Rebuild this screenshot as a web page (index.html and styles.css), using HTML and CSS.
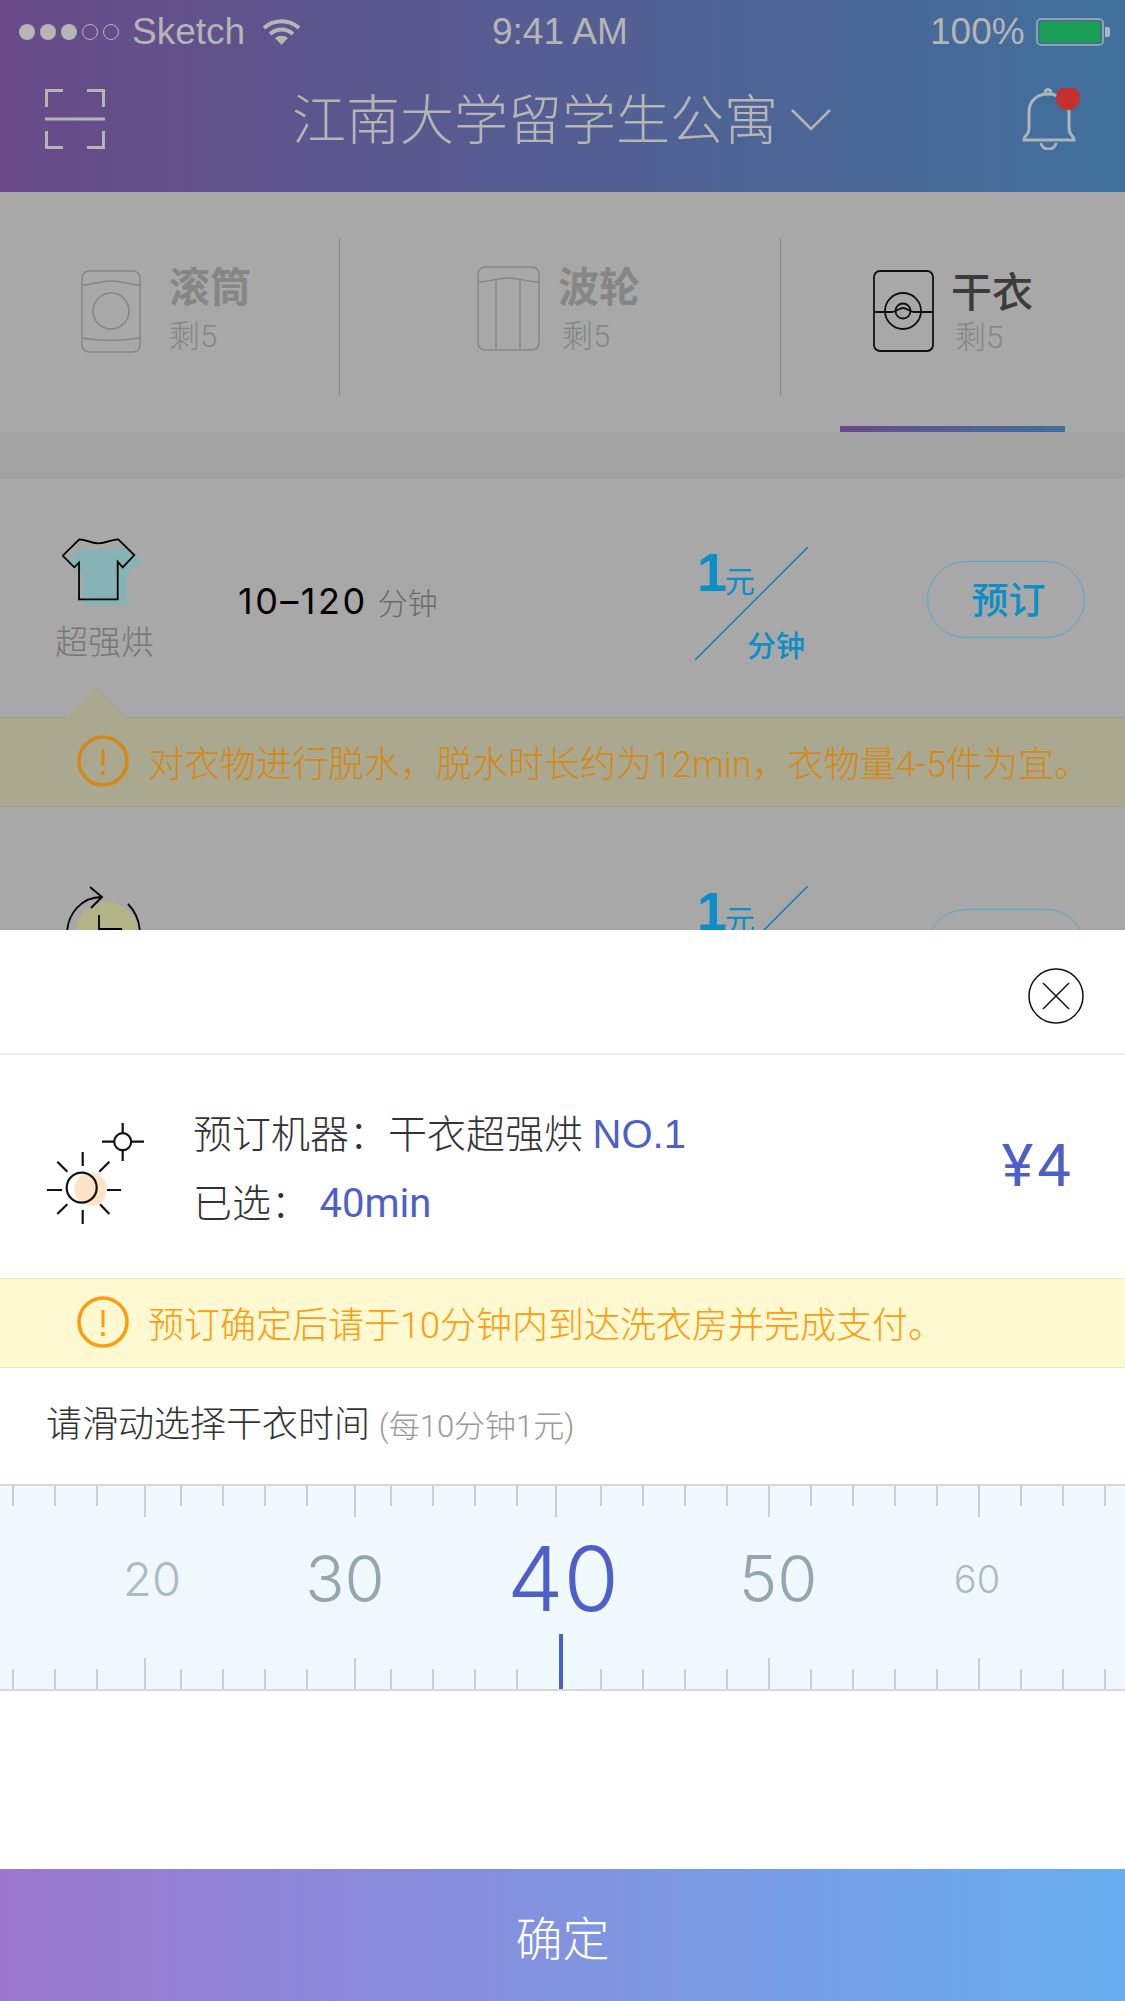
FILE: index.html
```html
<!DOCTYPE html>
<html>
<head>
<title>干衣预订</title>
<meta http-equiv="content-type" content="text/html; charset=utf-8" />
<link rel="stylesheet" href="styles.css">
</head>
<body>

<div class="behind">
	<div class="header">
		<div class="status">
			<span class="dot"></span><span class="dot"></span><span class="dot"></span><span class="dot dot-off"></span><span class="dot dot-off"></span>
			<span class="carrier">Sketch</span>
			<svg class="wifi" width="39" height="27" viewBox="0 0 39 27"><path d="M2 10 C12 1 27 1 37 10 M8 16 C15 10 24 10 31 16" fill="none" stroke="#b5b5b5" stroke-width="4"/><path d="M13 20 C17 17 22 17 26 20 L19.500 27 Z" fill="#b5b5b5"/></svg>
			<span class="clock">9:41 AM</span>
			<span class="percent">100%</span>
			<svg class="battery" width="74" height="28" viewBox="0 0 74 28"><rect x="1" y="1" width="66" height="26" rx="4" fill="none" stroke="#a9b4bd" stroke-width="1.500"/><rect x="3.500" y="3.500" width="61" height="21" rx="2" fill="#1b9f57"/><path d="M69 9 h3 a2 2 0 0 1 2 2 v6 a2 2 0 0 1 -2 2 h-3 Z" fill="#a9b4bd"/></svg>
		</div>
		<div class="nav">
			<svg class="scan" width="60" height="60" viewBox="0 0 60 60"><path d="M1.500 18 V1.500 H18 M42 1.500 H58.500 V18 M0 30 H60 M1.500 42 V58.500 H18 M42 58.500 H58.500 V42" fill="none" stroke="#b5b5b5" stroke-width="3"/></svg>
			<span class="title">江南大学留学生公寓</span>
			<svg class="chevron" width="40" height="22" viewBox="0 0 40 22"><path d="M1 1 L20 20 L39 1" fill="none" stroke="#b5b5b5" stroke-width="2.500"/></svg>
			<svg class="bell" width="60" height="62" viewBox="0 0 60 62"><path d="M2 52 C2 47 7 48 7 40 V24 C7 13 15 6 26 6 C37 6 47 13 47 24 V40 C47 48 52 47 52 52 Z M23 6 C23 0 29 0 29 6 M19 55 C20 63 33 63 34 55" fill="none" stroke="#a9b4bd" stroke-width="3"/><circle cx="46" cy="10" r="12" fill="#c5302e"/></svg>
		</div>
	</div>

	<div class="tabs">
		<div class="tab tab-a">
			<svg class="tab-icon" width="60" height="84" viewBox="-1 -1 60 84"><g fill="none" stroke="#858585" stroke-width="1.500"><rect x="0" y="0" width="58" height="81" rx="7"/><path d="M0 14 C12 14 16 10 29 10 C42 10 46 14 58 14 M0 67 C18 70 40 70 58 67"/><circle cx="29" cy="40" r="18"/></g></svg>
			<div class="tab-text"><b>滚筒</b><span>剩5</span></div>
		</div>
		<div class="tab tab-b">
			<svg class="tab-icon" width="63" height="86" viewBox="-1 -1 63 86"><g fill="none" stroke="#858585" stroke-width="1.500"><rect x="0" y="0" width="61" height="83" rx="7"/><path d="M0 15 C14 15 18 11 30 11 C42 11 47 15 61 15 M18 14 V84 M42 14 V84"/></g></svg>
			<div class="tab-text"><b>波轮</b><span>剩5</span></div>
		</div>
		<div class="tab tab-c">
			<svg class="tab-icon" width="61" height="82" viewBox="-1 -1 61 82"><g fill="none" stroke="#111" stroke-width="1.800"><rect x="0" y="0" width="59" height="80" rx="6"/><path d="M0 41 H18 C22 41 25 37 29 37 C33 37 36 41 40 41 H59"/><circle cx="29" cy="40" r="18"/><circle cx="29" cy="40" r="7.500"/></g></svg>
			<div class="tab-text tab-text-on"><b>干衣</b><span>剩5</span></div>
		</div>
		<div class="tab-line"></div>
	</div>
	<div class="strip"></div>

	<div class="row">
		<div class="mode">
			<svg width="82" height="68" viewBox="0 0 82 68"><path d="M6 20 L21 10 Q40 14 58 8 L81 23 L68 34 L65 32 V67 H21 V32 L16 34 Z" fill="#86b3b5"/><path d="M17.300 1.300 C24 1.300 28 5.300 36.300 5.300 C45 5.300 49 1.300 56.300 1.300 L72.300 17 L60.700 29.300 L55.700 23.700 V61.300 H17 V24.700 L12.300 29.300 L0.700 17.700 Z" fill="none" stroke="#000" stroke-width="1.800"/></svg>
			<span>超强烘</span>
		</div>
		<div class="duration"><b>10–120</b><span>分钟</span></div>
		<div class="price">
			<svg class="price-slash" width="113" height="113" viewBox="0 0 113 113"><path d="M0 113 L113 0" stroke="#117fae" stroke-width="1.500"/></svg>
			<div class="price-top"><b>1</b><span>元</span></div>
			<div class="price-unit">分钟</div>
		</div>
		<div class="book">预订</div>
	</div>

	<div class="notice notice-dim">
		<div class="notice-arrow"></div>
		<svg class="warn" width="52" height="52" viewBox="0 0 52 52"><g fill="none" stroke="#d68816"><circle cx="26" cy="26" r="24" stroke-width="3.500"/><path d="M26 14 V31" stroke-width="3"/><path d="M26 36 V40" stroke-width="3.500"/></g></svg>
		<span>对衣物进行脱水，脱水时长约为12min，衣物量4-5件为宜。</span>
	</div>

	<div class="row row-next">
		<div class="mode">
			<svg width="82" height="60" viewBox="0 0 82 60"><circle cx="45" cy="49" r="32" fill="#b3b488"/><path d="M5 50 C5 28 20 12 40 12 M28 2 L40 12 L29 23 M66 19 C74 27 78 38 78 50 M37 30 V44 H60" fill="none" stroke="#000" stroke-width="1.800"/></svg>
		</div>
		<div class="price">
			<svg class="price-slash" width="113" height="113" viewBox="0 0 113 113"><path d="M0 113 L113 0" stroke="#117fae" stroke-width="1.500"/></svg>
			<div class="price-top"><b>1</b><span>元</span></div>
		</div>
		<div class="book"></div>
	</div>
</div>

<div class="sheet">
	<div class="sheet-head">
		<svg width="56" height="56" viewBox="0 0 56 56"><circle cx="28" cy="28" r="27" fill="none" stroke="#111" stroke-width="1.500"/><path d="M15 15 L41 41 M41 15 L15 41" stroke="#111" stroke-width="1.500"/></svg>
	</div>

	<div class="info">
		<svg class="sun" width="98" height="103" viewBox="0 0 98 103"><circle cx="43.700" cy="67.300" r="16.500" fill="#fde4c8"/><g fill="none" stroke="#111" stroke-width="2.200"><circle cx="34.700" cy="65.700" r="15"/><path d="M35.700 30 V44 M35.700 88 V102 M0 68 H15 M60 68 H74 M10.300 39.700 L20.300 49.700 M62.300 39.700 L52.300 49.700 M10.300 92 L20.300 82.300 M62.300 92 L53 82.300"/><circle cx="75.700" cy="19.700" r="8.500"/><path d="M75.700 1 V11 M75.700 29 V39 M55 19.700 H67 M85 19.700 H97"/></g></svg>
		<div class="info-text">
			<div class="info-line">预订机器：干衣超强烘 <em>NO.1</em></div>
			<div class="info-line">已选： <em class="info-time">40min</em></div>
		</div>
		<div class="total">¥4</div>
	</div>

	<div class="notice">
		<svg class="warn" width="52" height="52" viewBox="0 0 52 52"><g fill="none" stroke="#ff9c0e"><circle cx="26" cy="26" r="24" stroke-width="3.500"/><path d="M26 14 V31" stroke-width="3"/><path d="M26 36 V40" stroke-width="3.500"/></g></svg>
		<span>预订确定后请于10分钟内到达洗衣房并完成支付。</span>
	</div>

	<div class="prompt">请滑动选择干衣时间 <span>(每10分钟1元)</span></div>

	<div class="ruler">
		<div class="ticks">
			<i></i><i></i><i></i><i class="long"></i><i></i><i></i><i></i><i></i><i class="long"></i><i></i><i></i><i></i><i></i><i class="long mid"></i><i></i><i></i><i></i><i></i><i class="long even"></i><i></i><i></i><i></i><i></i><i class="long even"></i><i></i><i></i><i></i>
		</div>
		<div class="scale">
			<span class="far">20</span><span class="near">30</span><span class="now">40</span><span class="near">50</span><span class="far far-end">60</span>
		</div>
		<div class="ticks ticks-bottom">
			<i></i><i></i><i></i><i class="long"></i><i></i><i></i><i></i><i></i><i class="long"></i><i></i><i></i><i></i><i></i><i class="long mid none"></i><i></i><i></i><i></i><i></i><i class="long even"></i><i></i><i></i><i></i><i></i><i class="long even"></i><i></i><i></i><i></i>
		</div>
		<div class="pointer"></div>
	</div>

	<div class="confirm">确定</div>
</div>

</body>
</html>
```

FILE: styles.css
```css
html, body {margin: 0; padding: 0;}
body {width: 1125px; height: 2001px; overflow: hidden; display: flex; flex-direction: column; background-color: #fff; font-family: "Liberation Sans", "Noto Sans CJK SC", sans-serif; color: #333;}
svg {display: block; flex: none;}
b, em, i {font-style: normal;}

.behind {height: 930px; flex: none; overflow: hidden; background-color: #a8a8a8;}

.header {height: 192px; background: linear-gradient(90deg, #684b88, #40709c); color: #b5b5b5;}
.status {height: 60px; box-sizing: border-box; padding-top: 4px; display: flex; align-items: center; padding-left: 19px; font-size: 37px;}
.dot {width: 16px; height: 16px; margin-right: 5px; border-radius: 50%; background-color: #b5b5b5; box-sizing: border-box;}
.dot-off {background: none; border: 1.5px solid #b5b5b5;}
.carrier {margin-left: 8px; width: 130px;}
.wifi {margin-top: -2px;}
.clock {margin-left: 191px; width: 438px;}
.percent {width: 106px;}
.nav {height: 60px; padding-top: 29px; display: flex; align-items: center; padding-left: 45px;}
.title {margin-left: 187px; margin-top: 4px; font-size: 54px; font-weight: 300; line-height: 60px; white-space: nowrap;}
.chevron {margin-left: 13px; margin-top: 2px;}
.bell {margin-left: 191px;}

.tabs {height: 240px; display: flex; position: relative; box-sizing: border-box; padding-top: 46px; padding-bottom: 36px;}
.tab {display: flex; box-sizing: border-box; border-left: 1px solid #8a8a8a;}
.tab-a {width: 339px; padding-left: 81px; border-left: 0; padding-top: 32px;}
.tab-b {width: 441px; padding-left: 137px; padding-top: 28px;}
.tab-c {flex: 1; padding-left: 92px; padding-top: 32px;}
.tab-icon {margin-right: 28px;}
.tab-b .tab-icon {margin-right: 18px;}
.tab-c .tab-icon {margin-right: 17px;}
.tab-text {display: flex; flex-direction: column; margin-top: -2px; color: #868686;}
.tab-b .tab-text {margin-top: 2px;}
.tab-c .tab-text {margin-top: 3px;}
.tab-text b {font-size: 41px; line-height: 40px; margin-bottom: 14px;}
.tab-text span {font-family: Roboto, "Noto Sans CJK SC", sans-serif; font-size: 31px; line-height: 30px; font-weight: 300;}
.tab-b .tab-text span, .tab-c .tab-text span {margin-left: 4px;}
.tab-text-on b {color: #3c3c3c; font-weight: 500; margin-bottom: 10px;}
.tab-line {position: absolute; left: 840px; bottom: 0; width: 225px; height: 6px; background: linear-gradient(90deg, #684b88, #40709c);}
.strip {height: 45px; background-color: #a2a2a2; border-bottom: 1px solid #9a9a9a;}

.row {height: 239px; display: flex; box-sizing: border-box; padding: 60px 40px 0 54px;}
.mode {width: 100px; display: flex; flex-direction: column; align-items: flex-start;}
.mode svg {margin-left: 8px;}
.mode span {margin-top: 17px; margin-left: 1px; font-size: 33px; line-height: 40px; font-weight: 300; white-space: nowrap; color: #767676;}
.duration {width: 457px; margin-left: 84px; margin-top: 43px; line-height: 40px; font-size: 30px; font-weight: 300; color: #6a6a6a;}
.duration b {margin-right: 10px; font-family: Inter, sans-serif; font-weight: 400; font-size: 36px; letter-spacing: 2.5px; color: #000;}
.price {width: 113px; height: 113px; margin-top: 9px; position: relative; display: flex; flex-direction: column; justify-content: space-between; color: #0c8ec6;}
.price-slash {position: absolute; left: 0; top: 0;}
.price-top {margin-left: 2px; line-height: 50px; font-size: 30px;}
.price-top b {font-size: 54px; margin-right: -2px; vertical-align: 0;}
.price-top span {vertical-align: -1px;}
.price-unit {margin-left: 52px; margin-bottom: -4px; font-size: 29px; line-height: 34px; font-weight: 500;}
.book {width: 158px; height: 77px; margin-left: 119px; margin-top: 23px; padding-left: 5px; border: 1.500px solid #55a9ce; border-radius: 39px; box-sizing: border-box; text-align: center; line-height: 80px; font-size: 37px; font-weight: 500; color: #0c8ec6;}
.row-next {height: 123px; padding-top: 78px;}
.row-next .price {margin-top: 1px; margin-left: 541px;}
.row-next .book {margin-top: 24px;}

.notice {height: 90px; flex: none; box-sizing: border-box; position: relative; display: flex; align-items: center; gap: 19px; padding-left: 77px; padding-bottom: 3px; background-color: #fef9d0; border: 1px solid #efe9c0; border-left: 0; border-right: 0; font-family: Roboto, "Noto Sans CJK SC", sans-serif; font-size: 36px; font-weight: 300; color: #ff9c0e;}
.notice-dim {background-color: #aaa88e; border-color: #9e9d84; color: #d68816;}
.notice-arrow {position: absolute; left: 66px; top: -31px; width: 62px; height: 31px; background-color: #aaa88e; clip-path: polygon(50% 0, 100% 100%, 0 100%);}

.sheet {flex: 1; display: flex; flex-direction: column; background-color: #fff;}
.sheet-head {height: 125px; flex: none; box-sizing: border-box; padding: 38px 0 0 1028px; border-bottom: 2px solid #eee;}
.info {height: 223px; flex: none; box-sizing: border-box; display: flex; align-items: flex-start; padding: 67px 50px 0 47px;}
.info-text {margin-left: 48px; margin-top: -18px; font-family: Roboto, "Noto Sans CJK SC", sans-serif; font-size: 39px; font-weight: 300;}
.info-line {height: 70px; line-height: 60px;}
.info-line em {font-family: "Liberation Sans", sans-serif; font-size: 40px; color: #4f5fc9;}
.info-line em.info-time {font-family: Roboto, sans-serif; font-weight: 400; font-size: 40px;}
.total {margin-left: auto; margin-top: 9px; font-family: Roboto, sans-serif; font-size: 60px; font-weight: 400; line-height: 70px; letter-spacing: 4px; color: #4f5fc9;}

.prompt {height: 116px; flex: none; box-sizing: border-box; padding-left: 46px; line-height: 114px; font-family: Roboto, "Noto Sans CJK SC", sans-serif; font-size: 36px; font-weight: 300;}
.prompt span {font-size: 31px; color: #999;}

.ruler {height: 207px; flex: none; box-sizing: border-box; position: relative; display: flex; flex-direction: column; background: linear-gradient(#f1f9fe, #eef8fd); border-top: 2px solid #d2dae0; border-bottom: 2px solid #d2dae0;}
.ticks {height: 31px; flex: none; display: flex; align-items: flex-start;}
.ticks-bottom {align-items: flex-end;}
.ticks i {width: 2px; height: 20px; flex: none; margin-left: 40px; background-color: #c8d0d5;}
.ticks i:first-child {margin-left: 12px;}
.ticks i.long {height: 31px; margin-left: 46px;}
.ticks i.long + i {margin-left: 34px;}
.ticks i.mid {margin-left: 37px;}
.ticks i.mid + i {margin-left: 43px;}
.ticks i.even {margin-left: 40px;}
.ticks i.even + i {margin-left: 40px;}
.ticks i.none {visibility: hidden;}
.scale {flex: 1; display: grid; grid-template-columns: 180px 206px 230px 200px 198px; padding: 0 0 18px 62px; align-items: center; text-align: center; font-family: Inter, "Liberation Sans", sans-serif; font-weight: 350;}
.far {font-size: 47px; color: #adbac4;}
.far-end {font-size: 38px;}
.near {font-size: 65px; color: #97a5b2;}
.now {font-size: 90px; color: #4f5fc9;}
.pointer {position: absolute; left: 559px; bottom: 0; width: 4px; height: 55px; background-color: #4f5fc9;}

.confirm {margin-top: auto; height: 132px; flex: none; box-sizing: border-box; padding-top: 5px; background: linear-gradient(90deg, #9b78cf, #68aef0); text-align: center; line-height: 132px; font-size: 47px; font-weight: 300; color: #fff;}
```
